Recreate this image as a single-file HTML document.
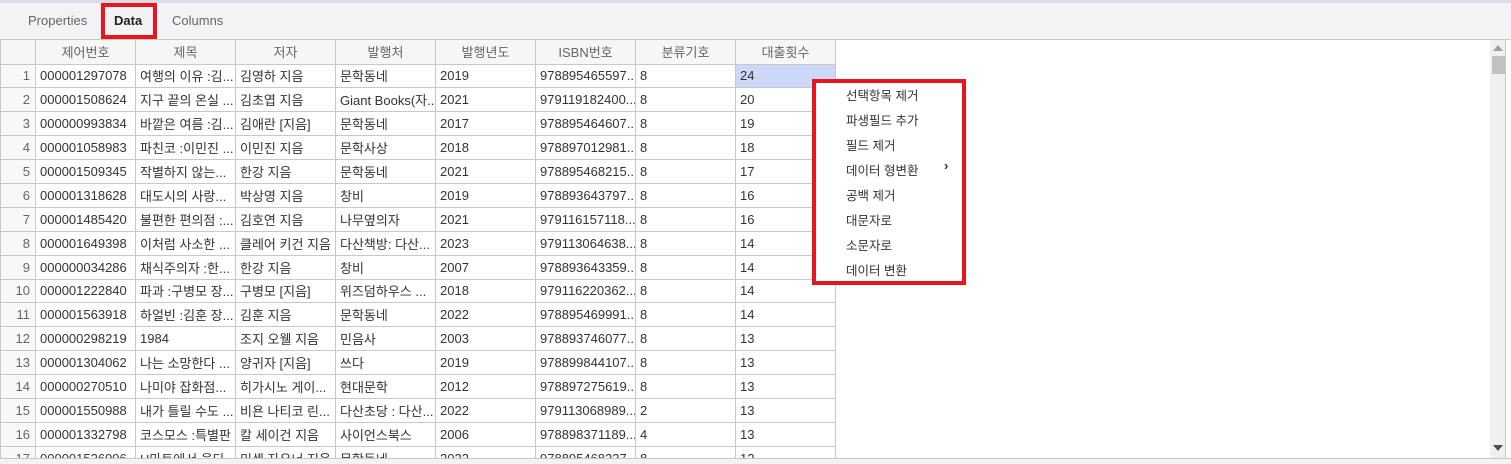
<!DOCTYPE html>
<html><head><meta charset="utf-8"><style>
*{box-sizing:border-box;margin:0;padding:0}
body{width:1511px;height:464px;overflow:hidden;background:#fff;font-family:"Liberation Sans","Noto Sans CJK KR",sans-serif;font-size:13px;color:#333;position:relative}
.top{position:absolute;left:0;top:0;width:1511px;height:40px;background:#f3f3f6;border-top:3px solid #dcdce4;border-bottom:1px solid #c8c8c8}
.tab{position:absolute;top:13px;font-size:13px;color:#666}
.sel{position:absolute;left:101px;top:3px;width:56px;height:36px;border:4px solid #e8141e}
.wrap{position:absolute;left:0;top:40px;width:1490px;height:418px;overflow:hidden}
table{border-collapse:collapse;table-layout:fixed;width:835px}
td,th{height:23.9px;border:1px solid #c8c8c8;white-space:nowrap;overflow:hidden;text-overflow:clip;padding:0 4px;font-weight:normal;text-align:left}
th{height:24px;background:#f6f6f6;color:#666;text-align:center;border-top:none}
td.n{text-align:right;background:#f8f8f8;color:#666;padding-right:5px}
.hl{background:#cdd8f8}
.sb{position:absolute;left:1490px;top:40px;width:16px;height:418px;background:#f0f0f0;border-right:1px solid #c8c8c8}
.th{position:absolute;left:2px;top:16px;width:13px;height:18px;background:#c1c1c1}
.menu{position:absolute;left:812px;top:79px;width:154px;height:206px;border:4px solid #e8141e;background:#fff}
.menu div{position:absolute;left:30px;font-size:12.5px;color:#333}
.bot{position:absolute;left:0;top:458px;width:1511px;height:6px;background:#f3f3f3;border-top:1px solid #c8c8c8}
</style></head><body>
<div class="top"></div>
<div class="tab" style="left:28px">Properties</div>
<div class="tab" style="left:114px;color:#222;font-weight:bold">Data</div>
<div class="tab" style="left:172px">Columns</div>
<div class="sel"></div>
<div class="wrap">
<table>
<colgroup><col style="width:35px"><col style="width:100px"><col style="width:100px"><col style="width:100px"><col style="width:100px"><col style="width:100px"><col style="width:100px"><col style="width:100px"><col style="width:100px"></colgroup>
<tr><th></th><th>제어번호</th><th>제목</th><th>저자</th><th>발행처</th><th>발행년도</th><th>ISBN번호</th><th>분류기호</th><th>대출횟수</th></tr>
<tr><td class="n">1</td><td>000001297078</td><td>여행의 이유 :김...</td><td>김영하 지음</td><td>문학동네</td><td>2019</td><td>978895465597...</td><td>8</td><td class="hl">24</td></tr>
<tr><td class="n">2</td><td>000001508624</td><td>지구 끝의 온실 ...</td><td>김초엽 지음</td><td>Giant Books(자...</td><td>2021</td><td>979119182400...</td><td>8</td><td>20</td></tr>
<tr><td class="n">3</td><td>000000993834</td><td>바깥은 여름 :김...</td><td>김애란 [지음]</td><td>문학동네</td><td>2017</td><td>978895464607...</td><td>8</td><td>19</td></tr>
<tr><td class="n">4</td><td>000001058983</td><td>파친코 :이민진 ...</td><td>이민진 지음</td><td>문학사상</td><td>2018</td><td>978897012981...</td><td>8</td><td>18</td></tr>
<tr><td class="n">5</td><td>000001509345</td><td>작별하지 않는...</td><td>한강 지음</td><td>문학동네</td><td>2021</td><td>978895468215...</td><td>8</td><td>17</td></tr>
<tr><td class="n">6</td><td>000001318628</td><td>대도시의 사랑...</td><td>박상영 지음</td><td>창비</td><td>2019</td><td>978893643797...</td><td>8</td><td>16</td></tr>
<tr><td class="n">7</td><td>000001485420</td><td>불편한 편의점 :...</td><td>김호연 지음</td><td>나무옆의자</td><td>2021</td><td>979116157118...</td><td>8</td><td>16</td></tr>
<tr><td class="n">8</td><td>000001649398</td><td>이처럼 사소한 ...</td><td>클레어 키건 지음</td><td>다산책방: 다산...</td><td>2023</td><td>979113064638...</td><td>8</td><td>14</td></tr>
<tr><td class="n">9</td><td>000000034286</td><td>채식주의자 :한...</td><td>한강 지음</td><td>창비</td><td>2007</td><td>978893643359...</td><td>8</td><td>14</td></tr>
<tr><td class="n">10</td><td>000001222840</td><td>파과 :구병모 장...</td><td>구병모 [지음]</td><td>위즈덤하우스 ...</td><td>2018</td><td>979116220362...</td><td>8</td><td>14</td></tr>
<tr><td class="n">11</td><td>000001563918</td><td>하얼빈 :김훈 장...</td><td>김훈 지음</td><td>문학동네</td><td>2022</td><td>978895469991...</td><td>8</td><td>14</td></tr>
<tr><td class="n">12</td><td>000000298219</td><td>1984</td><td>조지 오웰 지음</td><td>민음사</td><td>2003</td><td>978893746077...</td><td>8</td><td>13</td></tr>
<tr><td class="n">13</td><td>000001304062</td><td>나는 소망한다 ...</td><td>양귀자 [지음]</td><td>쓰다</td><td>2019</td><td>978899844107...</td><td>8</td><td>13</td></tr>
<tr><td class="n">14</td><td>000000270510</td><td>나미야 잡화점...</td><td>히가시노 게이...</td><td>현대문학</td><td>2012</td><td>978897275619...</td><td>8</td><td>13</td></tr>
<tr><td class="n">15</td><td>000001550988</td><td>내가 틀릴 수도 ...</td><td>비욘 나티코 린...</td><td>다산초당 : 다산...</td><td>2022</td><td>979113068989...</td><td>2</td><td>13</td></tr>
<tr><td class="n">16</td><td>000001332798</td><td>코스모스 :특별판</td><td>칼 세이건 지음</td><td>사이언스북스</td><td>2006</td><td>978898371189...</td><td>4</td><td>13</td></tr>
<tr><td class="n">17</td><td>000001526996</td><td>H마트에서 울다</td><td>미셸 자우너 지음</td><td>문학동네</td><td>2022</td><td>978895468337...</td><td>8</td><td>12</td></tr>
</table>
</div>
<div class="sb"><svg style="position:absolute;left:3px;top:5px" width="10" height="6"><path d="M5 0L10 6H0Z" fill="#a0a0a0"/></svg><div class="th"></div><svg style="position:absolute;left:3px;top:405px" width="10" height="6"><path d="M0 0H10L5 6Z" fill="#505050"/></svg></div>
<div class="bot"></div>
<div class="menu">
<div style="top:2px">선택항목 제거</div>
<div style="top:27px">파생필드 추가</div>
<div style="top:52px">필드 제거</div>
<div style="top:77px">데이터 형변환</div>
<div style="top:75px;left:128px;font-size:13px;font-weight:bold">›</div>
<div style="top:102px">공백 제거</div>
<div style="top:127px">대문자로</div>
<div style="top:152px">소문자로</div>
<div style="top:177px">데이터 변환</div>
</div>
</body></html>
